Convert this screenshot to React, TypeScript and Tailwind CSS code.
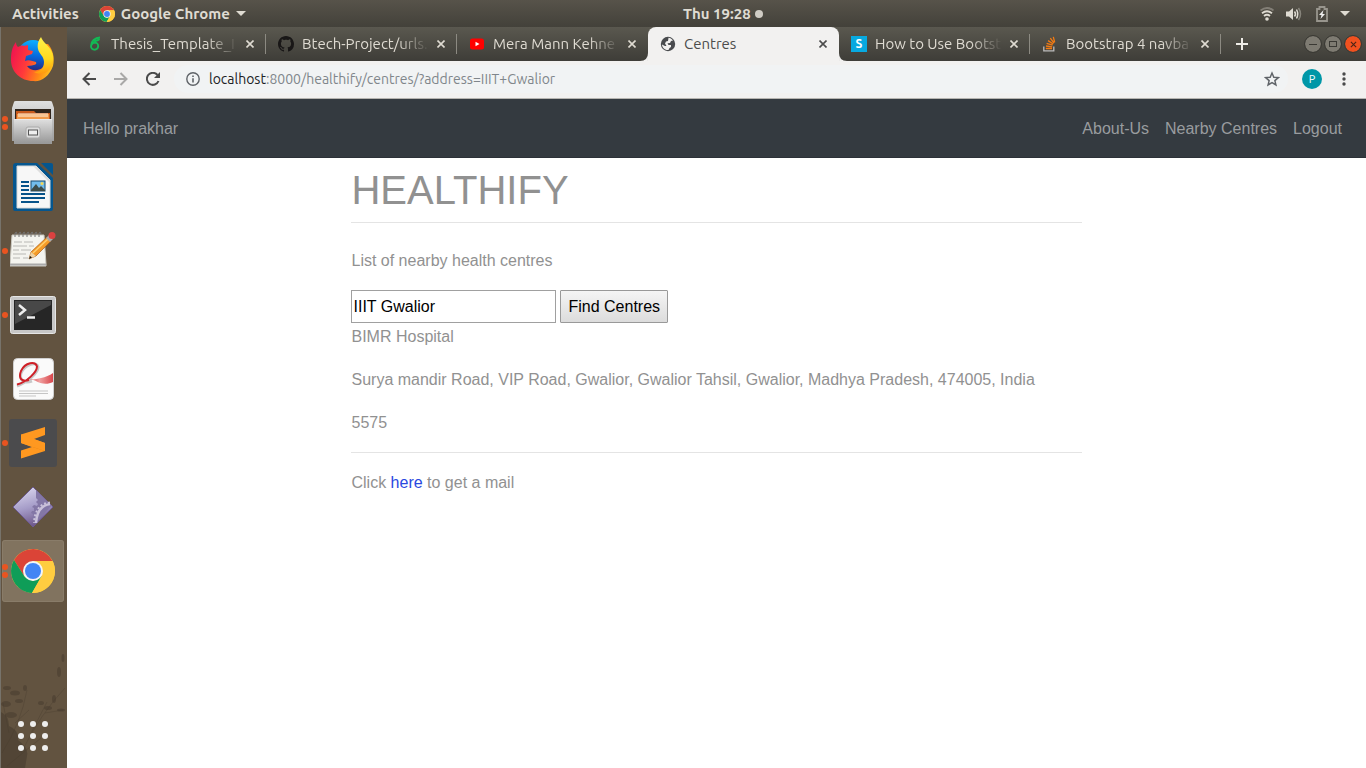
import React from "react";

const dotRows = [0, 12, 24];

function ChromeLogo({ className }: { className: string }) {
  return (
    <svg viewBox="0 0 44 44" className={className} aria-hidden="true">
      <circle cx="22" cy="22" r="22" fill="#ffcd40" />
      <path d="M3 11 A22 22 0 0 1 41.600 12 H22 L13 27Z" fill="#db4437" />
      <path d="M3 11 A22 22 0 0 0 21 44 L31 26.500 L22 32 L13.500 27.500Z" fill="#0f9d58" />
      <path d="M22 12 H41.600 A22 22 0 0 1 21 44 L30.700 27Z" fill="#ffcd40" />
      <circle cx="22" cy="22" r="10" fill="#f5f5f5" />
      <circle cx="22" cy="22" r="8" fill="#4285f4" />
    </svg>
  );
}

function Firefox() {
  return (
    <svg viewBox="0 0 44 46" className="h-[46px] w-11" aria-hidden="true">
      <defs>
        <linearGradient id="ffBody" x1="0" y1="0.3" x2="1" y2="0.6">
          <stop offset="0" stopColor="#f0154f" />
          <stop offset="0.4" stopColor="#ff3b3a" />
          <stop offset="0.75" stopColor="#ff8a16" />
          <stop offset="1" stopColor="#ffc41c" />
        </linearGradient>
        <linearGradient id="ffTail" x1="0" y1="0" x2="0" y2="1">
          <stop offset="0" stopColor="#fff14a" />
          <stop offset="0.6" stopColor="#ffd91e" />
          <stop offset="1" stopColor="#ff980e" />
        </linearGradient>
        <linearGradient id="ffGlobe" x1="0.5" y1="0" x2="0.4" y2="1">
          <stop offset="0" stopColor="#0bb0ff" />
          <stop offset="0.5" stopColor="#0568dc" />
          <stop offset="1" stopColor="#2b1f75" />
        </linearGradient>
      </defs>
      <circle cx="22" cy="20" r="16" fill="url(#ffGlobe)" />
      <path d="M5 6 C5 9 6 10 7 11 C9 10 11 9 13 10 L17 9 L17 14 L22 15 L21 18 L15 20 L14 25 C17 23 22 25 25 26 C26 29 24 29 16 30 C22 38 34 34 37 24 C39 18 34 13 32 8 L37 8 C42 14 44 22 42 30 C38 41 30 46 22 45 C10 45 0 36 0 24 C0 17 1 11 5 6Z" fill="url(#ffBody)" />
      <path d="M30 1 C28 4 26 7 27 13 C28 18 33 20 33 26 C33 33 28 36 23 36 C30 40 38 37 41 29 C44 20 41 14 36 9 C33 6 31 4 30 1Z" fill="url(#ffTail)" />
    </svg>
  );
}

function Files() {
  return (
    <svg viewBox="0 0 42 46" className="h-[46px] w-[42px]" aria-hidden="true">
      <defs>
        <linearGradient id="cab" x1="0" y1="0" x2="0" y2="1">
          <stop offset="0" stopColor="#e0e0e0" />
          <stop offset="1" stopColor="#999" />
        </linearGradient>
      </defs>
      <path d="M2 2 Q2 1 4 1 H38 Q40 1 40 2 L42 8 V41 H40 V44 H2 V41 H0 V8Z" fill="url(#cab)" />
      <path d="M3 9 H39 V20 H3Z" fill="#30251c" />
      <path d="M4 11 H22 L24 13 H38 V20 H4Z" fill="#c85a1c" />
      <path d="M5 14 H37 V19 H5Z" fill="#f29a4a" />
      <path d="M6 14 H36 M6 16 H36" stroke="#fff0dc" />
      <path d="M2 19 H40 V43 H2Z" fill="url(#cab)" />
      <path d="M2 19.500 H40" stroke="#e9e9e9" />
      <rect x="14" y="27" width="14" height="11" rx="2" fill="#ddd" stroke="#aaa" />
      <rect x="16.500" y="30" width="9" height="5" fill="#eee" stroke="#555" />
    </svg>
  );
}

function Writer() {
  return (
    <svg viewBox="0 0 40 48" className="h-12 w-10" aria-hidden="true">
      <path d="M3 0 H24 L40 15 V46 Q40 48 38 48 H2 Q0 48 0 46 V3 Q0 0 3 0Z" fill="#05568f" />
      <path d="M28 0 H38 Q40 0 40 2 V12Z" fill="#05568f" />
      <path d="M4 3 H23 L37 17 V45 H4Z" fill="#f7f7f7" stroke="#d8d8d8" />
      <path d="M23 3 L37 17 V20 L20 3Z" fill="#ddd" />
      <path d="M8 19 H16 M8 23 H16 M8 27 H16 M8 31 H32 M8 35 H32 M8 39 H26" stroke="#07538a" strokeWidth="2" />
      <rect x="18" y="18" width="14" height="10" fill="#72bceb" stroke="#174b70" />
      <path d="M18 27 L23 21 L26 25 L28 23 L32 27 V28 H18Z" fill="#3e4c48" />
      <circle cx="29" cy="20.500" r="1.500" fill="#f4d655" />
    </svg>
  );
}

function Editor() {
  return (
    <svg viewBox="0 0 46 36" className="mb-1 h-9 w-[46px]" aria-hidden="true">
      <path d="M2 4 H34 L36 33 V35 H0 V33Z" fill="#f4f4ef" stroke="#cac9c1" />
      <path d="M0 33.500 H36" stroke="#aaa" strokeWidth="2" />
      <path d="M4 11 H12 M14 11 H23 M3 15 H17 M19 15 H24 M3 19 H9 M11 19 H21 M3 23 H16 M3 27 H10 M13 27 H18" stroke="#b8b8b4" />
      {[5, 9, 13, 17, 21, 25, 29].map((x) => (
        <path key={x} d={"M" + x + " 6 V2 Q" + (x + 2) + " 0 " + (x + 2) + " 3"} fill="none" stroke="#777" />
      ))}
      <path d="M19 28 L21 21 L37 6 L41 10 L26 25Z" fill="#f49b28" stroke="#a95d18" strokeWidth="0.7" />
      <path d="M23 22 L38 8" stroke="#ffd070" strokeWidth="1.500" />
      <path d="M19 28 L21 21 L26 25Z" fill="#ecd2a5" />
      <path d="M19 28 L20 25 L22 26.500Z" fill="#111" />
      <path d="M36 7 L39 4 L43 8 L40 11Z" fill="#aaa" />
      <circle cx="42" cy="4.500" r="3.500" fill="#dc4140" />
    </svg>
  );
}

function Terminal() {
  return (
    <svg viewBox="0 0 46 38" className="h-[38px] w-[46px]" aria-hidden="true">
      <rect x="0.500" y="0.500" width="45" height="37" rx="2" fill="#c7c7c7" stroke="#e6e6e6" />
      <rect x="4" y="4" width="38" height="30" fill="#262626" />
      <path d="M5 5 H41 V9 L5 28Z" fill="#484848" />
      <path d="M9 9 L15 14 L9 19" fill="none" stroke="#eee" strokeWidth="2.500" />
      <path d="M17 21.500 H25" stroke="#eee" strokeWidth="2.500" />
    </svg>
  );
}

function Evince() {
  return (
    <svg viewBox="0 0 41 42" className="h-[42px] w-[41px]" aria-hidden="true">
      <defs>
        <linearGradient id="ribbon" x1="0" y1="0" x2="1" y2="0">
          <stop offset="0" stopColor="#d8232a" />
          <stop offset="0.5" stopColor="#f0a0a0" />
          <stop offset="1" stopColor="#d9474c" />
        </linearGradient>
      </defs>
      <rect x="0.500" y="0.500" width="40" height="41" rx="4" fill="#fafafa" stroke="#d0d0d0" />
      <path d="M4 28 C15 24 25 15 25 9 C24 3 12 6 8 15 C6 22 11 26 19 23" fill="none" stroke="#c8c8c8" strokeWidth="3" />
      <path d="M4 26.500 C14 24 24 14 24 8.500 C23 2.500 12 4.500 8 13 C5 21 9 24 16 22" fill="none" stroke="#cf2027" strokeWidth="2" />
      <path d="M13 22.500 C24 21 33 20 40 15 V24 C34 27 28 26 22 22.500 C19 21 16 22 13 22.500Z" fill="url(#ribbon)" />
      <path d="M6 33 H35 M6 35.500 H35 M6 38 H23" stroke="#c5c5c5" />
    </svg>
  );
}

function Sublime() {
  return (
    <svg viewBox="0 0 48 48" className="size-12" aria-hidden="true">
      <rect width="48" height="48" rx="3" fill="#4b4b4d" />
      <path d="M12 15.500 L36 8 V16 L25 20 L36 24 V32 L12 39.500 V31.500 L23 28 L12 24Z" fill="#ff9820" />
      <path d="M17 26 L23 28 L30 26 L36 24 V32Z" fill="#e98410" />
      <path d="M12 15.500 L36 24 V32 L12 24Z" fill="#ff9820" />
    </svg>
  );
}

function Gem() {
  return (
    <svg viewBox="0 0 42 42" className="size-[42px]" aria-hidden="true">
      <defs>
        <linearGradient id="gem" x1="0.3" y1="0" x2="0.6" y2="1">
          <stop offset="0" stopColor="#dad6ee" />
          <stop offset="0.5" stopColor="#a59cc8" />
          <stop offset="1" stopColor="#685084" />
        </linearGradient>
      </defs>
      <path d="M21 1 L41 21 L21 41 L1 21Z" fill="url(#gem)" stroke="#6c5990" />
      <path d="M24 4 L40 20 L38 21 L23 38 L22 34 L20 33 L20 31 L22 30 L21 28 L19 27 L20 25 L22 25 L22 22 L20 21 L22 19 L25 20 L26 18 L24 16 L26 14 L24 12Z" fill="#8377a6" />
      <path d="M38 18 Q25 20 24 37" fill="none" stroke="#c9c1da" strokeWidth="2.500" />
      <path d="M38 16.500 Q23 18 22 37" fill="none" stroke="#c9c1da" strokeWidth="2" strokeDasharray="2 2" />
    </svg>
  );
}

type DockItem = { name: string; icon: React.ReactNode; dots: number; box: string };

const dock: DockItem[] = [
  { name: "Firefox", icon: <Firefox />, dots: 0, box: "h-16" },
  { name: "Files", icon: <Files />, dots: 2, box: "h-16" },
  { name: "LibreOffice Writer", icon: <Writer />, dots: 0, box: "h-16" },
  { name: "Text Editor", icon: <Editor />, dots: 1, box: "h-16" },
  { name: "Terminal", icon: <Terminal />, dots: 1, box: "h-16" },
  { name: "Document Viewer", icon: <Evince />, dots: 0, box: "h-16" },
  { name: "Sublime Text", icon: <Sublime />, dots: 1, box: "h-16" },
  { name: "Software Settings", icon: <Gem />, dots: 0, box: "h-16" },
  {
    name: "Google Chrome",
    icon: <ChromeLogo className="size-11" />,
    dots: 2,
    box: "h-[62px] mt-px rounded-[3px] bg-[#81735f] outline outline-1 -outline-offset-1 outline-[#897c69]",
  },
];

function Dock() {
  return (
    <nav
      aria-label="Dock"
      className="flex w-[67px] shrink-0 flex-col border-l border-[#77736b] bg-[#625340]"
    >
      {dock.map((d) => (
        <button key={d.name} aria-label={d.name} className={"relative mx-px mr-[3px] flex shrink-0 items-center justify-center " + d.box}>
          {d.dots > 0 && (
            <span className="absolute left-0 flex flex-col gap-[2px]">
              {Array.from({ length: d.dots }, (_, i) => (
                <span key={i} className="size-[6px] rounded-full bg-[#e95420]" />
              ))}
            </span>
          )}
          {d.icon}
        </button>
      ))}
      <button aria-label="Show Applications" className="relative mt-auto flex h-16 w-full items-center justify-center pr-0.5">
        <svg viewBox="0 0 66 140" preserveAspectRatio="none" className="absolute bottom-0 left-0 h-[140px] w-full" aria-hidden="true">
          <g fill="none" stroke="#4a3d2f" opacity="0.45">
            <path d="M1 125 Q20 95 26 62 M8 105 L2 75 M14 95 L28 82 M20 125 Q40 85 64 60 M30 105 L46 74 M44 85 L62 82 M6 138 L40 110" strokeWidth="0.8" />
          </g>
          <g fill="#463a2e" opacity="0.5">
            <ellipse cx="6" cy="60" rx="4" ry="2" /><ellipse cx="14" cy="65" rx="5" ry="2.500" />
            <ellipse cx="5" cy="76" rx="5" ry="3" /><ellipse cx="18" cy="73" rx="4" ry="2" />
            <ellipse cx="10" cy="87" rx="6" ry="3" /><ellipse cx="24" cy="60" rx="2" ry="3" />
            <ellipse cx="40" cy="75" rx="3" ry="2" /><ellipse cx="47" cy="80" rx="4" ry="2" />
            <ellipse cx="53" cy="71" rx="2" ry="4" /><ellipse cx="58" cy="44" rx="2" ry="5" />
            <ellipse cx="62" cy="30" rx="1.500" ry="4" /><ellipse cx="60" cy="82" rx="4" ry="1.500" />
          </g>
          <path d="M0 84 Q8 88 8 98 Q18 102 17 112 Q28 120 26 128 L24 140 H0Z" fill="#463b2e" opacity="0.55" />
        </svg>
        <svg viewBox="0 0 30 30" className="relative size-[30px]" fill="#eee" aria-hidden="true">
          {dotRows.map((y) => dotRows.map((x) => <circle key={x + "-" + y} cx={x + 3} cy={y + 3} r="3" />))}
        </svg>
      </button>
    </nav>
  );
}

function TopBar() {
  return (
    <header className="grid h-[27px] shrink-0 grid-cols-[50%_auto_1fr] items-center bg-linear-to-b from-[#57534a] to-[#43413a] text-[15px] leading-5 font-bold text-[#dfdbd2]">
      <div className="flex items-center pl-3">
        <button>Activities</button>
        <button className="ml-5 flex items-center">
          <ChromeLogo className="mr-1.5 size-4" />
          Google Chrome
          <svg viewBox="0 0 10 6" className="ml-1.5 h-[6px] w-2.5" fill="#dfdbd2" aria-hidden="true"><path d="M0 0 H10 L5 5Z" /></svg>
        </button>
      </div>
      <button className="flex items-center gap-1">
        Thu 19:28
        <span className="size-2 rounded-full bg-[#d0ccc4]" />
      </button>
      <div className="flex items-center justify-end pr-4">
        <svg viewBox="0 0 14 14" className="mr-3 size-3.5" fill="none" stroke="#dfdbd2" strokeWidth="1.800" aria-hidden="true">
          <path d="M0.500 3.500 Q7 -1.500 13.500 3.500" opacity="0.35" />
          <path d="M2 6.200 Q7 2.200 12 6.200 M4 9 Q7 6.500 10 9" />
          <circle cx="7" cy="12" r="1.800" fill="#dfdbd2" stroke="none" />
        </svg>
        <svg viewBox="0 0 16 14" className="mr-3.5 h-3.5 w-4" fill="none" stroke="#dfdbd2" strokeWidth="1.500" aria-hidden="true">
          <path d="M0 4.500 H3 L7 1 V13 L3 9.500 H0Z" fill="#dfdbd2" stroke="none" />
          <path d="M8.500 4.500 Q10.500 7 8.500 9.500 M10.500 2.500 Q13 7 10.500 11.500" />
          <path d="M12.500 1 Q16.500 7 12.500 13" opacity="0.4" />
        </svg>
        <svg viewBox="0 0 12 16" className="mr-3 h-4 w-3" aria-hidden="true">
          <path d="M1 3 H3.500 V1 H8.500 V3 H11 V15 H1Z" fill="none" stroke="#98958d" strokeWidth="1.800" />
          <path d="M7.500 4 L3 9 H5.500 L4.500 13 L9 8 H6.500Z" fill="#eee" />
        </svg>
        <svg viewBox="0 0 10 6" className="h-[6px] w-2.5" fill="#dfdbd2" aria-hidden="true"><path d="M0 0 H10 L5 5Z" /></svg>
      </div>
    </header>
  );
}

function CloseX() {
  return (
    <svg viewBox="0 0 8 8" className="size-2" stroke="currentColor" strokeWidth="1.600" aria-hidden="true">
      <path d="M0.500 0.500 L7.500 7.500 M7.500 0.500 L0.500 7.500" />
    </svg>
  );
}

const favicons = {
  overleaf: (
    <svg viewBox="0 0 16 16" className="size-4" fill="none" stroke="#13b955" strokeWidth="1.900" aria-hidden="true">
      <path d="M13 1.500 C8 1.500 4 5 4 10 A3.600 3.600 0 1 0 8 6.500 C6.500 6.500 5 7.500 4.300 9 M7 4.500 Q10 5.500 12.500 3" />
    </svg>
  ),
  github: (
    <svg viewBox="0 0 16 16" className="size-4" fill="#191717" aria-hidden="true">
      <path d="M8 0C3.580 0 0 3.580 0 8c0 3.540 2.290 6.530 5.470 7.590.4.070.55-.17.55-.38 0-.19-.01-.82-.01-1.490-2.010.37-2.530-.49-2.690-.94-.09-.23-.48-.94-.82-1.130-.28-.15-.68-.52-.01-.53.63-.01 1.080.58 1.230.82.72 1.210 1.870.87 2.330.66.07-.52.28-.87.51-1.070-1.780-.2-3.640-.89-3.640-3.950 0-.87.31-1.590.82-2.150-.08-.2-.36-1.020.08-2.120 0 0 .67-.21 2.200.82.640-.18 1.320-.27 2-.27s1.360.09 2 .27c1.530-1.040 2.200-.82 2.200-.82.44 1.100.16 1.920.08 2.120.51.56.82 1.270.82 2.150 0 3.070-1.870 3.750-3.650 3.950.29.25.54.73.54 1.480 0 1.070-.01 1.930-.01 2.200 0 .21.15.46.55.38A8.010 8.010 0 0 0 16 8c0-4.420-3.580-8-8-8z" />
    </svg>
  ),
  youtube: (
    <svg viewBox="0 0 16 16" className="size-4" aria-hidden="true">
      <rect x="1" y="2.500" width="14" height="11" rx="2.500" fill="#f00" />
      <path d="M6.500 5.700 L10.500 8 L6.500 10.300Z" fill="#fff" />
    </svg>
  ),
  globe: (
    <svg viewBox="0 0 16 16" className="size-4" aria-hidden="true">
      <circle cx="8" cy="8" r="7.200" fill="#494b4e" />
      <path d="M8.500 1.800 C10 2 12 3 13 4.500 L11 5 L10 7 L7.500 7.200 L8.500 9 L11 9 L11 11 L9.500 12 L8.500 14 C5 14.500 2 11.500 2 8.500 L5 10 L6.500 10 L5 7.500 L6 5.500 L8 5Z" fill="#f2f1f0" />
    </svg>
  ),
  s: <span className="flex size-4 items-center justify-center bg-[#08a9e0] text-xs font-bold text-white">S</span>,
  stack: (
    <svg viewBox="0 0 16 16" className="size-4" fill="none" aria-hidden="true">
      <path d="M1.800 10.500 V14.800 H11.800 V10.500" stroke="#bcbbbb" strokeWidth="1.300" />
      <path d="M3.800 12.500 H10 M4 10 L10.200 10.800 M4.600 7.300 L10.600 9.200 M6.100 4.600 L11.200 8 M8.300 2.200 L12 7 M11.300 0.800 L12.700 6.300" stroke="#f47b12" strokeWidth="1.300" />
    </svg>
  ),
};

type TabData = { title: string; icon: keyof typeof favicons; active?: boolean; sep?: boolean };

const tabs: TabData[] = [
  { title: "Thesis_Template_I", icon: "overleaf", sep: true },
  { title: "Btech-Project/urls.", icon: "github", sep: true },
  { title: "Mera Mann Kehne", icon: "youtube" },
  { title: "Centres", icon: "globe", active: true },
  { title: "How to Use Bootst", icon: "s", sep: true },
  { title: "Bootstrap 4 navba", icon: "stack", sep: true },
];

function Tab({ tab }: { tab: TabData }) {
  const skin = tab.active
    ? "rounded-t-lg bg-[#f2f1f0] text-[#4c4c4c]"
    : "text-[#dfdbd2]";
  const fade = tab.active ? "" : "mask-r-from-75% mask-r-to-100%";
  return (
    <div role="tab" aria-selected={!!tab.active} className={"relative flex h-full w-[191px] min-w-0 items-center pl-3 pr-3 " + skin}>
      {tab.active && (
        <svg viewBox="0 0 208 8" className="absolute -left-2 bottom-0 h-2 w-[207px]" fill="#f2f1f0" aria-hidden="true">
          <path d="M0 8 Q8 8 8 0 V8Z M200 0 Q200 8 208 8 H200Z" />
        </svg>
      )}
      {favicons[tab.icon]}
      <span className={"ml-2 w-[127px] shrink-0 overflow-hidden whitespace-nowrap text-[15px] leading-5 " + fade}>{tab.title}</span>
      <button aria-label="Close tab" className="ml-auto flex items-center justify-center"><CloseX /></button>
      {tab.sep && <span className="absolute right-0 h-5 w-px bg-[#8c8a82]" />}
    </div>
  );
}

function TabStrip() {
  return (
    <div className="flex h-[34px] items-center bg-linear-to-b from-[#5a584f] to-[#3e3d38]">
      <div role="tablist" className="flex h-full min-w-0 items-center pl-2">
        {tabs.map((t) => <Tab key={t.title} tab={t} />)}
      </div>
      <button aria-label="New tab" className="ml-[15px] text-[#eeece7]">
        <svg viewBox="0 0 12 12" className="size-3" stroke="currentColor" strokeWidth="2" aria-hidden="true"><path d="M6 0 V12 M0 6 H12" /></svg>
      </button>
      <div className="ml-auto flex shrink-0 gap-1 pr-[5px]">
        <button aria-label="Minimize" className="flex size-4 items-center justify-center rounded-full bg-[#7e7b72] outline outline-1 outline-[#3a3934]">
          <span className="h-px w-2 bg-[#3a3934]" />
        </button>
        <button aria-label="Maximize" className="flex size-4 items-center justify-center rounded-full bg-[#7e7b72] outline outline-1 outline-[#3a3934]">
          <span className="h-[6px] w-2 border border-[#3a3934]" />
        </button>
        <button aria-label="Close window" className="flex size-4 items-center justify-center rounded-full bg-[#f1511f] text-[#4b2416] outline outline-1 outline-[#3a3934]">
          <svg viewBox="0 0 8 8" className="size-[7px]" stroke="currentColor" strokeWidth="1.300" aria-hidden="true"><path d="M1 1 L7 7 M7 1 L1 7" /></svg>
        </button>
      </div>
    </div>
  );
}

function Toolbar() {
  return (
    <div className="flex h-[38px] items-center border-b border-[#b6b4b0] bg-[#f2f1f0] pb-px text-[#4a4a4a]">
      <button aria-label="Back" className="ml-[15px]">
        <svg viewBox="0 0 14 14" className="size-3.5" fill="none" stroke="currentColor" strokeWidth="2" aria-hidden="true"><path d="M14 7 H1.500 M7.500 1 L1.500 7 L7.500 13" /></svg>
      </button>
      <button aria-label="Forward" className="ml-[18px] text-[#a9a8a7]">
        <svg viewBox="0 0 14 14" className="size-3.5" fill="none" stroke="currentColor" strokeWidth="2" aria-hidden="true"><path d="M0 7 H12.500 M6.500 1 L12.500 7 L6.500 13" /></svg>
      </button>
      <button aria-label="Reload" className="ml-[18px]">
        <svg viewBox="0 0 14 14" className="size-3.5" fill="none" stroke="currentColor" strokeWidth="2" aria-hidden="true">
          <path d="M12.500 9 A6 6 0 1 1 11.500 3" />
          <path d="M14 0 V6 H8Z" fill="currentColor" stroke="none" />
        </svg>
      </button>
      <div className="ml-3.5 flex h-7 flex-1 items-center rounded-full bg-[#f1f3f4] pl-3 pr-2">
        <svg viewBox="0 0 14 14" className="size-3.5 shrink-0" fill="none" stroke="#5f6368" strokeWidth="1.400" aria-hidden="true">
          <circle cx="7" cy="7" r="6.200" />
          <path d="M7 6.300 V10.500 M7 3.500 V5" strokeWidth="1.600" />
        </svg>
        <a href="#address" className="ml-[9px] whitespace-nowrap text-sm text-[#80868b]">
          <span className="text-[#202124]">localhost</span>:8000/healthify/centres/?address=IIIT+Gwalior
        </a>
        <button aria-label="Bookmark this page" className="ml-auto">
          <svg viewBox="0 0 24 24" className="size-4" fill="none" stroke="#5f6368" strokeWidth="2.200" aria-hidden="true">
            <path d="M12 3 L14.700 9.300 L21.500 9.900 L16.300 14.400 L17.900 21 L12 17.500 L6.100 21 L7.700 14.400 L2.500 9.900 L9.300 9.300Z" />
          </svg>
        </button>
      </div>
      <button aria-label="Profile" className="ml-3.5 flex size-5 items-center justify-center rounded-full bg-[#0097a7] text-[11px] text-white">P</button>
      <button aria-label="Menu" className="ml-5 mr-5">
        <svg viewBox="0 0 4 14" className="h-3.5 w-1" fill="#4a4a4a" aria-hidden="true">
          <circle cx="2" cy="2" r="1.700" /><circle cx="2" cy="7" r="1.700" /><circle cx="2" cy="12" r="1.700" />
        </svg>
      </button>
    </div>
  );
}

function Page() {
  return (
    <div className="flex-1 bg-white font-['Liberation_Sans',Arial,sans-serif] text-base leading-[27px] text-[#919191]">
      <nav className="flex h-[59px] items-center justify-between border-b border-[#2c3138] bg-[#343a40] px-4 text-[#999c9f]">
        <a href="#home">Hello prakhar</a>
        <div className="flex gap-4 pr-2">
          <a href="#about">About-Us</a>
          <a href="#centres">Nearby Centres</a>
          <a href="#logout">Logout</a>
        </div>
      </nav>
      <main className="mx-auto w-[56.2%] pt-2">
        <h1 className="text-[40px] leading-12">HEALTHIFY</h1>
        <hr className="mt-2 border-[#e4e4e4]" />
        <p className="mt-6">List of nearby health centres</p>
        <form className="mt-4 flex gap-1" onSubmit={(e) => e.preventDefault()}>
          <input aria-label="Address" defaultValue="IIIT Gwalior" className="h-[33px] w-[205px] border border-[#a0a0a0] bg-white px-px text-black outline-none" />
          <button className="h-[33px] rounded-[1px] border border-[#999] bg-linear-to-b from-[#f5f5f5] to-[#dcdcdc] px-[7px] text-black">Find Centres</button>
        </form>
        <p>BIMR Hospital</p>
        <p className="mt-4">Surya mandir Road, VIP Road, Gwalior, Gwalior Tahsil, Gwalior, Madhya Pradesh, 474005, India</p>
        <p className="mt-4">5575</p>
        <hr className="mt-4 border-[#e4e4e4]" />
        <p className="mt-4">Click <a href="#mail" className="text-[#2948df]">here</a> to get a mail</p>
      </main>
    </div>
  );
}

export default function App() {
  return (
    <div className="flex min-h-screen flex-col font-['Ubuntu','Noto_Sans',sans-serif]">
      <TopBar />
      <div className="flex flex-1">
        <Dock />
        <div className="flex min-w-0 flex-1 flex-col">
          <TabStrip />
          <Toolbar />
          <Page />
        </div>
      </div>
    </div>
  );
}
